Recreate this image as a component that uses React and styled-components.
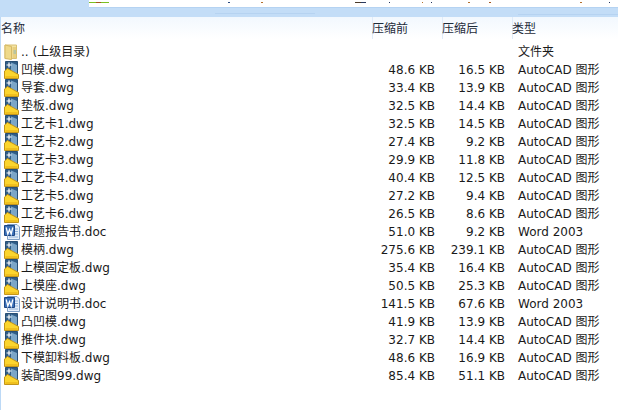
import React from "react";
import styled, { createGlobalStyle } from "styled-components";

const GlobalStyle = createGlobalStyle`
  html, body {
    margin: 0;
    padding: 0;
    background: #fff;
  }
`;

const files = [
  { name: "凹模.dwg", size: "48.6 KB", packed: "16.5 KB", kind: "dwg" },
  { name: "导套.dwg", size: "33.4 KB", packed: "13.9 KB", kind: "dwg" },
  { name: "垫板.dwg", size: "32.5 KB", packed: "14.4 KB", kind: "dwg" },
  { name: "工艺卡1.dwg", size: "32.5 KB", packed: "14.5 KB", kind: "dwg" },
  { name: "工艺卡2.dwg", size: "27.4 KB", packed: "9.2 KB", kind: "dwg" },
  { name: "工艺卡3.dwg", size: "29.9 KB", packed: "11.8 KB", kind: "dwg" },
  { name: "工艺卡4.dwg", size: "40.4 KB", packed: "12.5 KB", kind: "dwg" },
  { name: "工艺卡5.dwg", size: "27.2 KB", packed: "9.4 KB", kind: "dwg" },
  { name: "工艺卡6.dwg", size: "26.5 KB", packed: "8.6 KB", kind: "dwg" },
  { name: "开题报告书.doc", size: "51.0 KB", packed: "9.2 KB", kind: "doc" },
  { name: "模柄.dwg", size: "275.6 KB", packed: "239.1 KB", kind: "dwg" },
  { name: "上模固定板.dwg", size: "35.4 KB", packed: "16.4 KB", kind: "dwg" },
  { name: "上模座.dwg", size: "50.5 KB", packed: "25.3 KB", kind: "dwg" },
  { name: "设计说明书.doc", size: "141.5 KB", packed: "67.6 KB", kind: "doc" },
  { name: "凸凹模.dwg", size: "41.9 KB", packed: "13.9 KB", kind: "dwg" },
  { name: "推件块.dwg", size: "32.7 KB", packed: "14.4 KB", kind: "dwg" },
  { name: "下模卸料板.dwg", size: "48.6 KB", packed: "16.9 KB", kind: "dwg" },
  { name: "装配图99.dwg", size: "85.4 KB", packed: "51.1 KB", kind: "dwg" },
];

const typeLabel = { dwg: "AutoCAD 图形", doc: "Word 2003" };

const FolderIcon = () => (
  <svg width="16" height="18" viewBox="0 0 16 18">
    <path d="M1 2 H12.5 V15.5 H1 Z" fill="#f3e3a2" stroke="#d9c072" />
    <path d="M1 2 L7.5 3.5 V16.5 L1 15.5 Z" fill="#efd98a" stroke="#d6b964" />
    <path d="M8.5 4 H12 V15 H8.5 Z" fill="#e8cf80" />
    <path d="M9.5 7 H12 V11 H9.5 Z" fill="#b8c4a0" />
  </svg>
);

const DwgIcon = () => (
  <svg width="16" height="18" viewBox="0 0 16 18">
    <path d="M1.5 0.5 H13.5 V13 H1.5 Z" fill="#2f5c86" stroke="#274f75" />
    <path d="M7 1.5 L13 4 V12 H7 Z" fill="#7ba6c8" />
    <path d="M5 1.5 V6.5 M2.5 4 H7.5" stroke="#fff" strokeWidth="1.2" />
    <path d="M0.5 10 L3.5 7.5 L14.5 13.5 V17.5 H0.5 Z" fill="#fbd52e" stroke="#c2951a" />
    <path d="M1.5 15.5 H13.5 V16.5 H1.5 Z" fill="#e3a90f" />
  </svg>
);

const DocIcon = () => (
  <svg width="16" height="18" viewBox="0 0 16 18">
    <path d="M3.5 1.5 H13 L15.5 4 V16.5 H3.5 Z" fill="#e6eff9" stroke="#7f9fc6" />
    <path d="M11 6 H14 M11 8.5 H14 M11 11 H14 M5 14 H14" stroke="#8fb0d8" />
    <path d="M0.5 2.5 H10.5 V12.5 H0.5 Z" fill="#3a70b8" stroke="#1d4684" />
    <path d="M2.2 4.5 L3.8 11 L5.5 6.5 L7.2 11 L8.8 4.5" fill="none" stroke="#fff" strokeWidth="1.3" />
  </svg>
);

const TopSliver = () => (
  <svg width="529" height="2" viewBox="0 0 529 2">
    <rect x="0" y="0" width="7" height="1" fill="#7cc021" />
    <rect x="7" y="0" width="5" height="1" fill="#a4561c" />
    <rect x="12" y="0" width="8" height="1" fill="#7cc021" />
    <rect x="139" y="0" width="2" height="1" fill="#2b4a7f" />
    <rect x="172" y="0" width="2" height="1" fill="#b5702c" />
    <rect x="266" y="0" width="6" height="1" fill="#4a3a2a" />
    <rect x="272" y="0" width="5" height="1" fill="#2b3a5f" />
    <rect x="300" y="0" width="1" height="1" fill="#22335c" />
    <rect x="333" y="0" width="1" height="1" fill="#b5702c" />
    <rect x="342" y="0" width="1" height="1" fill="#22335c" />
    <rect x="379" y="0" width="2" height="1" fill="#b5702c" />
    <rect x="400" y="0" width="2" height="1" fill="#a4561c" />
    <rect x="491" y="0" width="2" height="1" fill="#b5702c" />
    <rect x="520" y="0" width="1" height="1" fill="#22335c" />
  </svg>
);

const App = () => {
  return (
    <>
      <GlobalStyle />
      <Page>
        <Chrome>
          <AddressPanel>
            <TopSliver />
          </AddressPanel>
        </Chrome>
        <ListPane>
          <HeaderRow>
            <HeaderCell>名称</HeaderCell>
            <HeaderCell $divider>压缩前</HeaderCell>
            <HeaderCell $divider>压缩后</HeaderCell>
            <HeaderCell $divider>类型</HeaderCell>
          </HeaderRow>
          <Rows>
            <Row>
              <NameCell>
                <IconSlot>
                  <FolderIcon />
                </IconSlot>
                .. (上级目录)
              </NameCell>
              <SizeCell />
              <SizeCell />
              <TypeCell>文件夹</TypeCell>
            </Row>
            {files.map((file) => (
              <Row key={file.name}>
                <NameCell>
                  <IconSlot>{file.kind === "doc" ? <DocIcon /> : <DwgIcon />}</IconSlot>
                  {file.name}
                </NameCell>
                <SizeCell>{file.size}</SizeCell>
                <SizeCell>{file.packed}</SizeCell>
                <TypeCell>{typeLabel[file.kind]}</TypeCell>
              </Row>
            ))}
          </Rows>
        </ListPane>
      </Page>
    </>
  );
};

const Page = styled.div`
  width: 618px;
  height: 410px;
  overflow: hidden;
  display: flex;
  flex-direction: column;
  font-family: "DejaVu Sans", "Noto Sans CJK SC", sans-serif;
  font-size: 12px;
  color: #1a1a1a;
`;

const Chrome = styled.div`
  height: 17px;
  flex: none;
  background-color: #c3ddf7;
  background-image: linear-gradient(#b6d3f1, #b6d3f1), linear-gradient(#b6d3f1, #b6d3f1);
  background-size: 100px 1px, 100px 1px;
  background-position: 215px 13px, 518px 14px;
  background-repeat: no-repeat;
`;

const AddressPanel = styled.div`
  margin-left: 89px;
  height: 8px;
  box-sizing: border-box;
  background: #fff;
  border-bottom: 1px solid #b5d3f2;
  line-height: 0;
  overflow: hidden;
`;

const ListPane = styled.div`
  flex: 1;
  display: flex;
  flex-direction: column;
  border-left: 1px solid #bcd9f6;
  background: #fff;
`;

const columns = "371px 70px 70px 106px";

const HeaderRow = styled.div`
  height: 22px;
  flex: none;
  display: grid;
  grid-template-columns: ${columns};
  background: linear-gradient(#f2f8fe, #ffffff);
`;

const HeaderCell = styled.div`
  height: 22px;
  line-height: 22px;
  font-family: "Noto Sans CJK SC", sans-serif;
  color: #1e2b3a;
  box-shadow: ${(props) => (props.$divider ? "inset 1px 0 0 #dfebf9" : "none")};
`;

const Rows = styled.div`
  padding-top: 4px;
  display: flex;
  flex-direction: column;
`;

const Row = styled.div`
  height: 18px;
  display: grid;
  grid-template-columns: ${columns};
  align-items: center;
  line-height: 18px;
  white-space: nowrap;
`;

const NameCell = styled.div`
  display: flex;
  align-items: center;
  padding-left: 3px;
`;

const IconSlot = styled.span`
  width: 17px;
  height: 18px;
  flex: none;
  display: flex;
  align-items: center;
`;

const SizeCell = styled.div`
  text-align: right;
  padding-right: 7px;
`;

const TypeCell = styled.div`
  padding-left: 6px;
`;

export default App;
